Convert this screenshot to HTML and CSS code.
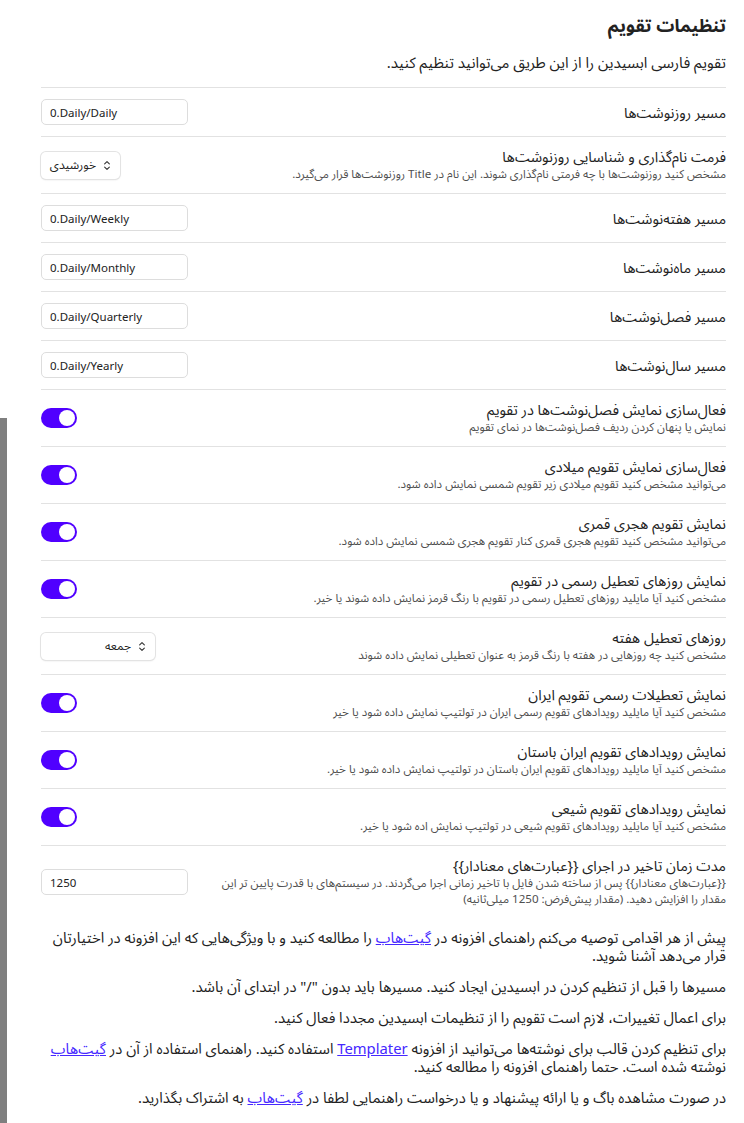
FILE: index.html
```html
<!DOCTYPE html>
<html lang="fa" dir="rtl">
<head>
<meta charset="utf-8">
<title>تنظیمات تقویم</title>
<link rel="stylesheet" href="styles.css">
</head>
<body>
<div class="edge-bar"></div>
<main class="page">
  <h2 class="title">تنظیمات تقویم</h2>
  <p class="intro">تقویم فارسی ابسیدین را از این طریق می‌توانید تنظیم کنید.</p>

  <div class="setting">
    <div class="info"><div class="name">مسیر روزنوشت‌ها</div></div>
    <div class="control"><input class="text-input" type="text" value="0.Daily/Daily" dir="ltr"></div>
  </div>

  <div class="setting">
    <div class="info">
      <div class="name">فرمت نام‌گذاری و شناسایی روزنوشت‌ها</div>
      <div class="desc">مشخص کنید روزنوشت‌ها با چه فرمتی نام‌گذاری شوند. این نام در Title روزنوشت‌ها قرار می‌گیرد.</div>
    </div>
    <div class="control">
      <div class="dropdown dd-small">
        <svg class="chev" viewBox="0 0 10 14" width="8" height="11"><path d="M2 5 L5 2 L8 5 M2 9 L5 12 L8 9" fill="none" stroke="#333" stroke-width="1.4" stroke-linecap="round" stroke-linejoin="round"/></svg>
        <span>خورشیدی</span>
      </div>
    </div>
  </div>

  <div class="setting">
    <div class="info"><div class="name">مسیر هفته‌نوشت‌ها</div></div>
    <div class="control"><input class="text-input" type="text" value="0.Daily/Weekly" dir="ltr"></div>
  </div>

  <div class="setting">
    <div class="info"><div class="name">مسیر ماه‌نوشت‌ها</div></div>
    <div class="control"><input class="text-input" type="text" value="0.Daily/Monthly" dir="ltr"></div>
  </div>

  <div class="setting">
    <div class="info"><div class="name">مسیر فصل‌نوشت‌ها</div></div>
    <div class="control"><input class="text-input" type="text" value="0.Daily/Quarterly" dir="ltr"></div>
  </div>

  <div class="setting">
    <div class="info"><div class="name">مسیر سال‌نوشت‌ها</div></div>
    <div class="control"><input class="text-input" type="text" value="0.Daily/Yearly" dir="ltr"></div>
  </div>

  <div class="setting">
    <div class="info">
      <div class="name">فعال‌سازی نمایش فصل‌نوشت‌ها در تقویم</div>
      <div class="desc">نمایش یا پنهان کردن ردیف فصل‌نوشت‌ها در نمای تقویم</div>
    </div>
    <div class="control"><div class="toggle"><span class="knob"></span></div></div>
  </div>

  <div class="setting">
    <div class="info">
      <div class="name">فعال‌سازی نمایش تقویم میلادی</div>
      <div class="desc">می‌توانید مشخص کنید تقویم میلادی زیر تقویم شمسی نمایش داده شود.</div>
    </div>
    <div class="control"><div class="toggle"><span class="knob"></span></div></div>
  </div>

  <div class="setting">
    <div class="info">
      <div class="name">نمایش تقویم هجری قمری</div>
      <div class="desc">می‌توانید مشخص کنید تقویم هجری قمری کنار تقویم هجری شمسی نمایش داده شود.</div>
    </div>
    <div class="control"><div class="toggle"><span class="knob"></span></div></div>
  </div>

  <div class="setting">
    <div class="info">
      <div class="name">نمایش روزهای تعطیل رسمی در تقویم</div>
      <div class="desc">مشخص کنید آیا مایلید روزهای تعطیل رسمی در تقویم با رنگ قرمز نمایش داده شوند یا خیر.</div>
    </div>
    <div class="control"><div class="toggle"><span class="knob"></span></div></div>
  </div>

  <div class="setting">
    <div class="info">
      <div class="name">روزهای تعطیل هفته</div>
      <div class="desc">مشخص کنید چه روزهایی در هفته با رنگ قرمز به عنوان تعطیلی نمایش داده شوند</div>
    </div>
    <div class="control">
      <div class="dropdown dd-wide">
        <svg class="chev" viewBox="0 0 10 14" width="8" height="11"><path d="M2 5 L5 2 L8 5 M2 9 L5 12 L8 9" fill="none" stroke="#333" stroke-width="1.4" stroke-linecap="round" stroke-linejoin="round"/></svg>
        <span>جمعه</span>
      </div>
    </div>
  </div>

  <div class="setting">
    <div class="info">
      <div class="name">نمایش تعطیلات رسمی تقویم ایران</div>
      <div class="desc">مشخص کنید آیا مایلید رویدادهای تقویم رسمی ایران در تولتیپ نمایش داده شود یا خیر</div>
    </div>
    <div class="control"><div class="toggle"><span class="knob"></span></div></div>
  </div>

  <div class="setting">
    <div class="info">
      <div class="name">نمایش رویدادهای تقویم ایران باستان</div>
      <div class="desc">مشخص کنید آیا مایلید رویدادهای تقویم ایران باستان در تولتیپ نمایش داده شود یا خیر.</div>
    </div>
    <div class="control"><div class="toggle"><span class="knob"></span></div></div>
  </div>

  <div class="setting">
    <div class="info">
      <div class="name">نمایش رویدادهای تقویم شیعی</div>
      <div class="desc">مشخص کنید آیا مایلید رویدادهای تقویم شیعی در تولتیپ نمایش اده شود یا خیر.</div>
    </div>
    <div class="control"><div class="toggle"><span class="knob"></span></div></div>
  </div>

  <div class="setting last">
    <div class="info">
      <div class="name">مدت زمان تاخیر در اجرای {{عبارت‌های معنادار}}</div>
      <div class="desc">{{عبارت‌های معنادار}} پس از ساخته شدن فایل با تاخیر زمانی اجرا می‌گردند. در سیستم‌های با قدرت پایین تر این مقدار را افزایش دهید. (مقدار پیش‌فرض: 1250 میلی‌ثانیه)</div>
    </div>
    <div class="control"><input class="text-input" type="text" value="1250" dir="ltr"></div>
  </div>

  <section class="notes">
    <p>پیش از هر اقدامی توصیه می‌کنم راهنمای افزونه در <a href="#">گیت‌هاب</a> را مطالعه کنید و با ویژگی‌هایی که این افزونه در اختیارتان قرار می‌دهد آشنا شوید.</p>
    <p>مسیرها را قبل از تنظیم کردن در ابسیدین ایجاد کنید. مسیرها باید بدون "/" در ابتدای آن باشد.</p>
    <p>برای اعمال تغییرات، لازم است تقویم را از تنظیمات ابسیدین مجددا فعال کنید.</p>
    <p>برای تنظیم کردن قالب برای نوشته‌ها می‌توانید از افزونه <a href="#">Templater</a> استفاده کنید. راهنمای استفاده از آن در <a href="#">گیت‌هاب</a> نوشته شده است. حتما راهنمای افزونه را مطالعه کنید.</p>
    <p>در صورت مشاهده باگ و یا ارائه پیشنهاد و یا درخواست راهنمایی لطفا در <a href="#">گیت‌هاب</a> به اشتراک بگذارید.</p>
  </section>
</main>
</body>
</html>
```

FILE: styles.css
```css
* { box-sizing: border-box; }

html, body {
  margin: 0;
  padding: 0;
  background: #ffffff;
}

body {
  font-family: "Noto Sans", "Noto Sans Arabic", "DejaVu Sans", sans-serif;
  color: #222222;
}

.edge-bar {
  position: fixed;
  left: 0;
  top: 418px;
  bottom: 0;
  width: 7px;
  background: #7f7f7f;
}

.page {
  padding: 0 18px 0 41px;
}

.title {
  font-size: 18px;
  line-height: 24px;
  font-weight: 700;
  margin: 13px 0 0;
}

.intro {
  font-size: 15px;
  line-height: 20px;
  margin: 15px 0 15px;
}

.setting {
  display: flex;
  align-items: center;
  gap: 20px;
  border-top: 1px solid #e2e2e2;
  padding: 11px 0;
}

.info {
  flex: 1;
  min-width: 0;
}

.name {
  font-size: 14.5px;
  line-height: 17px;
  color: #222222;
}

.desc {
  font-size: 11.6px;
  line-height: 16px;
  color: #4f4f4f;
  margin-top: 1px;
}

.control {
  flex: none;
  display: flex;
  align-items: center;
}

.text-input {
  width: 147px;
  height: 26px;
  border: 1px solid #dddddd;
  border-radius: 5px;
  padding: 0 8px;
  font-family: "Noto Sans", sans-serif;
  font-size: 11.5px;
  font-weight: 400;
  color: #222222;
  background: #ffffff;
  text-align: left;
  outline: none;
}

.dropdown {
  height: 27px;
  display: flex;
  align-items: center;
  gap: 7px;
  padding: 0 9px 0 10px;
  border-radius: 5px;
  background: #ffffff;
  box-shadow: 0 0 0 1px #e3e3e3, 0 1px 2px rgba(0, 0, 0, 0.12);
  font-size: 12px;
  color: #222222;
}

.dd-small { width: 79px; }
.dd-wide { width: 114px; }

.chev { flex: none; }

.toggle {
  width: 36px;
  height: 20px;
  border-radius: 10px;
  background: #5000ff;
  position: relative;
}

.knob {
  position: absolute;
  top: 2px;
  left: 18px;
  width: 16px;
  height: 16px;
  border-radius: 50%;
  background: #ffffff;
}

.notes {
  margin: 0 0 0 -4px;
}

.notes p {
  font-size: 14.8px;
  line-height: 18px;
  margin: 13px 0;
  color: #222222;
}

.notes p:first-child { margin-top: 10px; }

.notes a {
  color: #4628ff;
  text-decoration: underline;
}
```
